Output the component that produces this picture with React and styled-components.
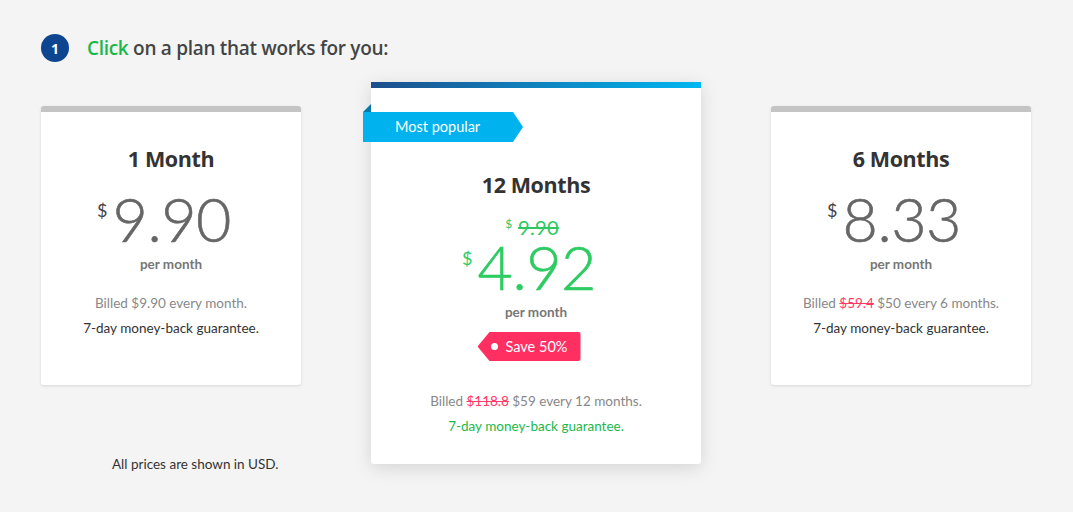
import React from 'react'
import styled, { createGlobalStyle } from 'styled-components'

const GlobalStyle = createGlobalStyle`
  html, body {
    margin: 0;
    padding: 0;
    background: #f4f4f4;
  }
  body {
    font-family: Lato, "Open Sans", sans-serif;
    -webkit-font-smoothing: antialiased;
  }
`

const Page = styled.div`
  width: 1073px;
  height: 512px;
  overflow: hidden;
  padding: 34px 42px 0 41px;
  box-sizing: border-box;
`

const Step = styled.div`
  display: flex;
  align-items: center;
  gap: 18px;
  height: 28px;
`

const StepNum = styled.div`
  width: 28px;
  height: 28px;
  border-radius: 50%;
  background: #0d4590;
  color: #fff;
  display: flex;
  align-items: center;
  justify-content: center;
  font-family: "Open Sans", sans-serif;
  font-weight: 700;
  font-size: 14px;
`

const StepText = styled.h2`
  margin: 0;
  font-family: "Open Sans", sans-serif;
  font-weight: 600;
  font-size: 19px;
  color: #444;
  letter-spacing: -0.3px;
  span {
    color: #19b84a;
  }
`

const Row = styled.div`
  display: flex;
  align-items: flex-start;
  gap: 70px;
  margin-top: 20px;
`

const Side = styled.div`
  width: 260px;
  margin-top: 24px;
  display: flex;
  flex-direction: column;
`

const Card = styled.div`
  position: relative;
  background: #fff;
  border-radius: 3px;
  border-top: 6px solid ${p => (p.$featured ? 'transparent' : '#c4c4c4')};
  ${p => p.$featured
    ? `border-image: linear-gradient(90deg, #1d4e8b, #00b7f1) 1 0 0 0;`
    : ''}
  box-shadow: ${p => (p.$featured
    ? '0 4px 18px rgba(0,0,0,0.13)'
    : '0 1px 3px rgba(0,0,0,0.12)')};
  width: ${p => (p.$featured ? '330px' : '260px')};
  height: ${p => (p.$featured ? '382px' : '279px')};
  box-sizing: border-box;
  display: flex;
  flex-direction: column;
  align-items: center;
  padding-top: ${p => (p.$featured ? '84px' : '34px')};
`

const Ribbon = styled.div`
  position: absolute;
  left: -8px;
  top: 24px;
  height: 30px;
  width: 160px;
  background: #00b2ee;
  color: #fff;
  font-size: 14.5px;
  line-height: 30px;
  padding-left: 32px;
  box-sizing: border-box;
  clip-path: polygon(0 0, 150px 0, 160px 50%, 150px 100%, 0 100%);
`

const Fold = styled.div`
  position: absolute;
  left: -8px;
  top: 16px;
  width: 0;
  height: 0;
  border-left: 8px solid transparent;
  border-bottom: 8px solid #0b76a8;
`

const Title = styled.h3`
  margin: 0;
  font-family: "Open Sans", sans-serif;
  font-weight: 700;
  font-size: 21.5px;
  line-height: 26px;
  color: #333;
  letter-spacing: -0.4px;
`

const OldPrice = styled.div`
  margin-top: 19px;
  display: flex;
  align-items: flex-start;
  color: #2ec863;
  line-height: 20px;
  height: 20px;
  margin-left: -8px;
  sup {
    font-size: 12px;
    line-height: 12px;
    margin-right: 6px;
    margin-top: 1px;
  }
  s {
    font-size: 20px;
    font-weight: 400;
    letter-spacing: 0.3px;
    text-decoration-thickness: 1.5px;
  }
`

const Price = styled.div`
  margin-top: ${p => (p.$tight ? '7px' : '24px')};
  display: flex;
  align-items: flex-start;
  color: ${p => (p.$green ? '#2ecb63' : '#666')};
  margin-left: -14px;
`

const Currency = styled.span`
  font-size: 18px;
  line-height: 18px;
  margin-top: 5px;
  margin-right: 5px;
  color: ${p => (p.$green ? '#2ecb63' : '#444')};
`

const Amount = styled.span`
  font-size: 61px;
  line-height: 46px;
  font-weight: 300;
  letter-spacing: -0.5px;
  -webkit-text-stroke: 0.6px currentColor;
`

const PerMonth = styled.div`
  margin-top: 14px;
  font-size: 13.5px;
  font-weight: 700;
  line-height: 16px;
  color: #777;
`

const Tag = styled.div`
  margin-top: 12px;
  margin-left: -14px;
  position: relative;
  height: 29px;
  width: 103px;
  background: #ff2f62;
  color: #fff;
  font-size: 14.5px;
  line-height: 29px;
  padding-left: 28px;
  box-sizing: border-box;
  border-radius: 0 3px 3px 0;
  clip-path: polygon(12px 0, 100% 0, 100% 100%, 12px 100%, 0 50%);
  &::before {
    content: '';
    position: absolute;
    left: 13px;
    top: 11px;
    width: 7px;
    height: 7px;
    border-radius: 50%;
    background: #fff;
  }
`

const Billed = styled.div`
  margin-top: ${p => (p.$gap || 21)}px;
  font-size: 13.5px;
  line-height: 20px;
  color: #888;
  s {
    color: #ff3a66;
  }
`

const Guarantee = styled.div`
  margin-top: 5px;
  font-size: 13.5px;
  line-height: 20px;
  color: ${p => (p.$green ? '#1ab94b' : '#333')};
`

const Note = styled.div`
  margin-top: 71px;
  padding-left: 71px;
  font-size: 13.5px;
  color: #333;
`

function SideCard({ title, amount, billed, children }) {
  return (
    <Card>
      <Title>{title}</Title>
      <Price>
        <Currency>$</Currency>
        <Amount>{amount}</Amount>
      </Price>
      <PerMonth>per month</PerMonth>
      <Billed>{billed || children}</Billed>
      <Guarantee>7-day money-back guarantee.</Guarantee>
    </Card>
  )
}

export default function App() {
  return (
    <>
      <GlobalStyle />
      <Page>
        <Step>
          <StepNum>1</StepNum>
          <StepText><span>Click</span> on a plan that works for you:</StepText>
        </Step>
        <Row>
          <Side>
            <SideCard title="1 Month" amount="9.90" billed="Billed $9.90 every month." />
            <Note>All prices are shown in USD.</Note>
          </Side>
          <Card $featured>
            <Fold />
            <Ribbon>Most popular</Ribbon>
            <Title>12 Months</Title>
            <OldPrice>
              <sup>$</sup>
              <s>9.90</s>
            </OldPrice>
            <Price $green $tight>
              <Currency $green>$</Currency>
              <Amount>4.92</Amount>
            </Price>
            <PerMonth>per month</PerMonth>
            <Tag>Save 50%</Tag>
            <Billed $gap={30}>Billed <s>$118.8</s> $59 every 12 months.</Billed>
            <Guarantee $green>7-day money-back guarantee.</Guarantee>
          </Card>
          <Side>
            <SideCard title="6 Months" amount="8.33">
              Billed <s>$59.4</s> $50 every 6 months.
            </SideCard>
          </Side>
        </Row>
      </Page>
    </>
  )
}
